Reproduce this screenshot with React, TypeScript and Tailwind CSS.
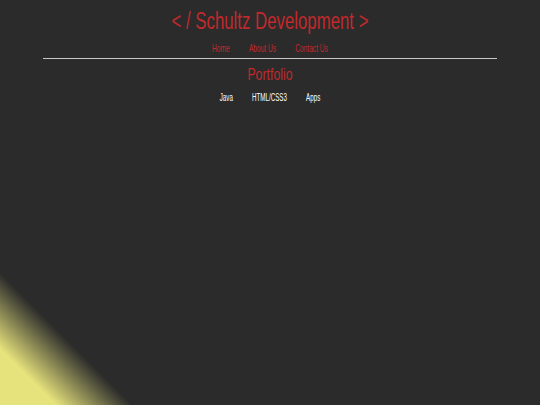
const font = { fontFamily: '"Liberation Sans", Arial, sans-serif' };

export default function App() {
  const nav = ['Home', 'About Us', 'Contact Us'];
  const portfolio = ['Java', 'HTML/CSS3', 'Apps'];

  return (
    <div
      className="min-h-screen w-full overflow-hidden bg-[linear-gradient(45deg,#e6e27c_6%,#2b2b2b_14%)] text-center"
      style={font}
    >
      {/* Header */}
      <header className="pt-[6px]">
        <h1 className="scale-x-[0.73] text-[23px] leading-[30px] text-[#c2292b]">
          &lt; / Schultz Development &gt;
        </h1>
        <nav className="mt-[6px] flex scale-x-[0.6] justify-center gap-[32px] text-[11px] leading-[12px] text-[#c2292b]">
          {nav.map((item) => (
            <a key={item} href="#">{item}</a>
          ))}
        </nav>
        <hr className="mx-[43px] mt-[4px] border-0 border-t border-[#c8c8c8]" />
      </header>

      {/* Portfolio */}
      <main>
        <h2 className="mt-[6px] scale-x-[0.77] text-[16px] leading-[20px] text-[#c2292b]">Portfolio</h2>
        <ul className="mt-[7px] flex scale-x-[0.62] justify-center gap-[31px] text-[10px] leading-[12px] text-white">
          {portfolio.map((item) => (
            <li key={item}>{item}</li>
          ))}
        </ul>
      </main>
    </div>
  );
}
